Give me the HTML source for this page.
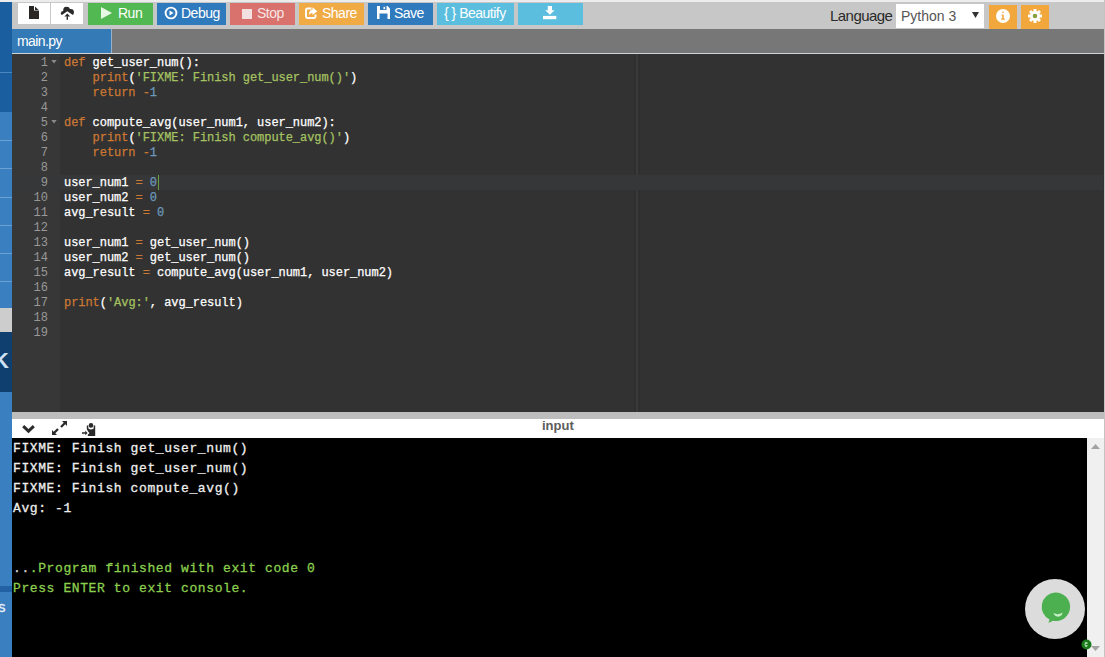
<!DOCTYPE html>
<html><head><meta charset="utf-8">
<style>
*{box-sizing:border-box;margin:0;padding:0}
html,body{width:1105px;height:657px;overflow:hidden;background:#c7c7c7;font-family:"Liberation Sans",sans-serif}
.abs{position:absolute}
svg{position:absolute;overflow:visible}
#left{left:0;top:0;width:12px;height:657px;background:#3a7fc0}
#toolbar{left:12px;top:0;width:1093px;height:29px;background:#c7c7c7;border-top:2px solid #ececec}
.btn{position:absolute;top:3px;height:22px;color:#fff;font-size:14px;line-height:21px;letter-spacing:-0.5px;white-space:nowrap}
.btn span{position:absolute;top:0}
#tabbar{left:12px;top:29px;width:1093px;height:24px;background:#777}
#tab{left:12px;top:29px;width:99px;height:24px;background:#337ab7;color:#fff;font-size:14px;line-height:24px;padding-left:5px;letter-spacing:-0.6px}
#tabline{left:12px;top:53px;width:1093px;height:1px;background:#cfd4d8}
#editor{left:12px;top:54px;width:1093px;height:358px;background:#323232}
#gutter{left:12px;top:54px;width:48px;height:358px;background:#373737}
#pm{left:634px;top:54px;width:6px;height:358px;background:#2f2f2f}
#pm2{left:636px;top:54px;width:2px;height:358px;background:#3a3a3a}
#active{left:60px;top:175px;width:1043px;height:15px;background:#363738}
#gactive{left:12px;top:175px;width:48px;height:15px;background:#363738}
#code{left:64px;top:56px;font-family:"Liberation Mono",monospace;font-size:12px;line-height:15px;letter-spacing:-0.05px;color:#fff;white-space:pre;-webkit-text-stroke:0.25px currentColor}
#nums{left:12px;top:56px;width:36px;font-family:"Liberation Mono",monospace;font-size:12px;line-height:15px;color:#999;text-align:right;white-space:pre}
.k{color:#CC7833}.s{color:#A5C261}.n{color:#6C99BB}
#splitter{left:12px;top:412px;width:1093px;height:7px;background:#bdbdbd}
#chead{left:12px;top:419px;width:1092px;height:19px;background:#fff}
#console{left:12px;top:438px;width:1075px;height:219px;background:#000}
#out{left:13px;top:439px;font-family:"Liberation Mono",monospace;font-weight:normal;-webkit-text-stroke:0.3px currentColor;font-size:13px;letter-spacing:0.6px;line-height:20px;color:#eee;white-space:pre}
#scroll{left:1087px;top:438px;width:17px;height:219px;background:#f0f0f0}
#redge{left:1104px;top:0;width:1px;height:657px;background:#c4c4c4}
</style></head><body>
<div id="left" class="abs"></div>
<div class="abs" style="left:0;top:0;width:12px;height:112px;background:#1b5e9f"></div>
<div class="abs" style="left:0;top:72px;width:12px;height:1px;background:#4b87bf"></div>
<div class="abs" style="left:0;top:140px;width:12px;height:1px;background:#6aa2d4"></div>
<div class="abs" style="left:0;top:168px;width:12px;height:1px;background:#6aa2d4"></div>
<div class="abs" style="left:0;top:197px;width:12px;height:1px;background:#6aa2d4"></div>
<div class="abs" style="left:0;top:225px;width:12px;height:1px;background:#6aa2d4"></div>
<div class="abs" style="left:0;top:253px;width:12px;height:1px;background:#6aa2d4"></div>
<div class="abs" style="left:0;top:281px;width:12px;height:1px;background:#6aa2d4"></div>
<div class="abs" style="left:0;top:308px;width:12px;height:24px;background:#cdcdcd"></div>
<div class="abs" style="left:0;top:332px;width:12px;height:60px;background:#0f3f6e"></div>
<div class="abs" style="left:-7px;top:349px;font-size:22px;font-weight:bold;color:#cfe2f4;line-height:24px">K</div>
<div class="abs" style="left:0;top:586px;width:12px;height:6px;background:#2262a2"></div>
<div class="abs" style="left:-2px;top:598px;font-size:15px;color:#e8f0f8;line-height:18px;-webkit-text-stroke:0.3px #e8f0f8">s</div>

<div id="toolbar" class="abs"></div>
<div class="abs" style="left:0;top:0;width:1105px;height:2px;background:#ececec"></div>
<div class="btn" style="left:18px;width:32px;height:21px;top:3px;background:#fff">
 <svg style="left:11px;top:3px" width="10" height="13" viewBox="0 0 10 13"><path d="M0 0H5V4.6H10V13H0Z" fill="#2a2624"/><path d="M6 0.6L9.6 4.1H6Z" fill="#2a2a2a"/></svg>
</div>
<div class="abs" style="left:50px;top:3px;width:1px;height:21px;background:#c8c8c8"></div>
<div class="btn" style="left:51px;width:32px;height:21px;top:3px;background:#fff">
 <svg style="left:9px;top:3px" width="14" height="14" viewBox="0 0 14 14"><g fill="#2a2a2a"><circle cx="3.3" cy="7.3" r="2.4"/><circle cx="6.6" cy="4.1" r="3.4"/><circle cx="10.6" cy="6.3" r="3.3"/><rect x="3.3" y="5" width="7.3" height="4.6"/></g><path d="M0 10.2L7.3 5.3L14 9.8V14H0Z" fill="#fff"/><path d="M4.4 10.4L7.3 7.6L10.2 10.4Z" fill="#2a2a2a"/><rect x="6.6" y="10.2" width="1.4" height="3.6" fill="#2a2a2a"/></svg>
</div>
<div class="btn" style="left:88px;width:65px;background:#52b852">
 <svg style="left:13px;top:4px" width="11" height="12" viewBox="0 0 11 12"><path d="M0 0L11 6L0 12Z" fill="#e6f7e6"/></svg>
 <span style="left:30px">Run</span></div>
<div class="btn" style="left:157px;width:69px;background:#2f7abd">
 <svg style="left:6.5px;top:2.5px" width="14" height="14" viewBox="0 0 14 14"><circle cx="7" cy="7" r="5.4" fill="none" stroke="#fff" stroke-width="1.9"/><path d="M5.5 4.4L9.6 7L5.5 9.6Z" fill="#fff"/></svg>
 <span style="left:24px">Debug</span></div>
<div class="btn" style="left:230px;width:65px;background:#d9716d;color:#f8e6e6">
 <svg style="left:12px;top:6px" width="10" height="10" viewBox="0 0 10 10"><rect width="10" height="10" fill="#f3e0e0"/></svg>
 <span style="left:27px">Stop</span></div>
<div class="btn" style="left:299px;width:65px;background:#f1ab45">
 <svg style="left:6px;top:3.5px" width="13" height="13" viewBox="0 0 13 13"><path d="M6.5 1.5H2.5Q1 1.5 1 3V9.5Q1 11 2.5 11H9Q10.5 11 10.5 9.5V7.5" fill="none" stroke="#fff" stroke-width="1.9"/><path d="M7.5 0.3L12.3 4.2L7.5 8V6Q5 6 3.8 8.3Q4 3.2 7.5 2.6Z" fill="#fff"/></svg>
 <span style="left:23px">Share</span></div>
<div class="btn" style="left:368px;width:65px;background:#2f7abd">
 <svg style="left:9px;top:2.5px" width="13" height="13" viewBox="0 0 13 13"><path d="M0 0H10.5L13 2.5V13H0Z" fill="#fff"/><rect x="3" y="0" width="6.5" height="4" fill="#2f7abd"/><rect x="6.5" y="0.8" width="1.6" height="2.4" fill="#fff"/><rect x="2.5" y="7.5" width="8" height="5.5" fill="#2f7abd"/></svg>
 <span style="left:26px">Save</span></div>
<div class="btn" style="left:437px;width:77px;background:#5bbede">
 <span style="left:7px">{ } Beautify</span></div>
<div class="btn" style="left:518px;width:65px;background:#5bbede">
 <svg style="left:25px;top:3px" width="14" height="14" viewBox="0 0 14 14"><path d="M4.8 0H9V4.2H11.6L6.9 8.8L2.2 4.2H4.8Z" fill="#fff"/><rect x="0" y="9.9" width="13.3" height="3.3" fill="#fff"/></svg>
</div>
<div class="abs" style="left:830px;top:7px;font-size:15px;color:#2a2a2a;letter-spacing:-0.55px">Language</div>
<div class="abs" style="left:896px;top:4px;width:88px;height:24px;background:#fff;font-size:14px;color:#555;line-height:24px;padding-left:5px">Python 3</div>
<svg style="left:972px;top:12px" width="7" height="6" viewBox="0 0 7 6"><path d="M0 0H7L3.5 6Z" fill="#333"/></svg>
<div class="btn" style="left:989px;width:28px;top:5px;height:24px;background:#f2a73c">
 <svg style="left:7px;top:4px" width="14" height="14" viewBox="0 0 14 14"><circle cx="7" cy="7" r="7" fill="#fff"/><rect x="6.3" y="2.6" width="1.4" height="1.5" fill="#f2a73c"/><rect x="6.2" y="5.6" width="1.6" height="4.4" fill="#f2a73c"/><rect x="5" y="9.6" width="4" height="1.1" fill="#f2a73c"/><rect x="5.4" y="5.6" width="1" height="1" fill="#f2a73c"/></svg>
</div>
<div class="btn" style="left:1021px;width:28px;top:5px;height:24px;background:#f2a73c">
 <svg style="left:7px;top:4px" width="14" height="14" viewBox="-7 -7 14 14"><g fill="#fff"><circle r="5"/><rect x="-1.5" y="-7" width="3" height="14"/><rect x="-1.5" y="-7" width="3" height="14" transform="rotate(45)"/><rect x="-1.5" y="-7" width="3" height="14" transform="rotate(90)"/><rect x="-1.5" y="-7" width="3" height="14" transform="rotate(135)"/></g><circle r="2.3" fill="#8aa040"/></svg>
</div>

<div id="tabbar" class="abs"></div>
<div id="tab" class="abs">main.py</div>
<div class="abs" style="left:111px;top:29px;width:1px;height:24px;background:#9ab2c8"></div>
<div id="tabline" class="abs"></div>
<div id="editor" class="abs"></div>
<div id="gutter" class="abs"></div>
<div id="pm" class="abs"></div><div id="pm2" class="abs"></div>
<div id="gactive" class="abs"></div>
<div id="active" class="abs"></div>
<svg style="left:51px;top:60px" width="6" height="4" viewBox="0 0 6 4"><path d="M0.3 0H5.7L3 3.5Z" fill="#8a8a8a"/></svg>
<svg style="left:51px;top:120px" width="6" height="4" viewBox="0 0 6 4"><path d="M0.3 0H5.7L3 3.5Z" fill="#8a8a8a"/></svg>
<div class="abs" style="left:158px;top:175px;width:1px;height:15px;background:#7ab84a;opacity:.8"></div>
<div id="nums" class="abs">1
2
3
4
5
6
7
8
9
10
11
12
13
14
15
16
17
18
19</div>
<div id="code" class="abs"><span class="k">def</span> get_user_num():
    <span class="k">print</span>(<span class="s">'FIXME: Finish get_user_num()'</span>)
    <span class="k">return</span> <span class="k">-</span><span class="n">1</span>

<span class="k">def</span> compute_avg(user_num1, user_num2):
    <span class="k">print</span>(<span class="s">'FIXME: Finish compute_avg()'</span>)
    <span class="k">return</span> <span class="k">-</span><span class="n">1</span>

user_num1 <span class="k">=</span> <span class="n">0</span>
user_num2 <span class="k">=</span> <span class="n">0</span>
avg_result <span class="k">=</span> <span class="n">0</span>

user_num1 <span class="k">=</span> get_user_num()
user_num2 <span class="k">=</span> get_user_num()
avg_result <span class="k">=</span> compute_avg(user_num1, user_num2)

<span class="k">print</span>(<span class="s">'Avg:'</span>, avg_result)</div>

<div id="splitter" class="abs"></div>
<div id="chead" class="abs"></div>
<svg style="left:22px;top:425px" width="13" height="8" viewBox="0 0 13 8"><path d="M1.2 1.2L6.5 6.2L11.8 1.2" fill="none" stroke="#2b2b2b" stroke-width="3"/></svg>
<svg style="left:52px;top:421px" width="15" height="14" viewBox="0 0 15 14"><path d="M10 0H15V5L13.3 3.3L9.8 6.8L8.2 5.2L11.7 1.7Z M0 14V9L1.7 10.7L5.2 7.2L6.8 8.8L3.3 12.3L5 14Z" fill="#2b2b2b"/></svg>
<svg style="left:82px;top:423px" width="14" height="13" viewBox="0 0 14 13"><circle cx="9" cy="2.4" r="2.3" fill="#2b2b2b"/><path d="M4.8 2.5H6.3V5.3Q6.3 6.4 9 6.4Q11.7 6.4 11.7 5.3V2.5H13.2V13H5.8V11.8L7.5 10L5.8 8.2V7.8Q4.8 7 4.8 5.5Z" fill="#2b2b2b"/><path d="M0 9.3H3.3V7.8L5.6 10L3.3 12.2V10.7H0Z" fill="#2b2b2b"/></svg>
<div class="abs" style="left:542px;top:418px;font-size:13px;font-weight:bold;color:#5c5c5c;line-height:16px">input</div>
<div id="console" class="abs"></div>
<div id="out" class="abs">FIXME: Finish get_user_num()
FIXME: Finish get_user_num()
FIXME: Finish compute_avg()
Avg: -1


<span style="color:#d0d0d0">..</span><span style="color:#8ccf4e">.Program finished with exit code 0
Press ENTER to exit console.</span></div>
<div id="scroll" class="abs"></div>
<svg style="left:1091px;top:444px" width="9" height="5" viewBox="0 0 9 5"><path d="M0 5H9L4.5 0Z" fill="#a3a3a3"/></svg>
<svg style="left:1091px;top:646px" width="9" height="5" viewBox="0 0 9 5"><path d="M0 0H9L4.5 5Z" fill="#a3a3a3"/></svg>
<div id="redge" class="abs"></div>
<div class="abs" style="left:1025px;top:579px;width:60px;height:60px;border-radius:50%;background:#dcdcdc"></div>
<svg style="left:1040px;top:592px" width="30" height="32" viewBox="0 0 30 32"><path d="M15 0.5A14.3 14.3 0 1 1 13 28.8L8.5 31L9.5 27.5A14.3 14.3 0 0 1 15 0.5Z" fill="#4cb050"/><path d="M13.5 21Q18 23.5 22.5 20.5Q22 25 17.5 24.6Q14.5 24.2 13.5 21Z" fill="#c6efc6"/></svg>
<svg style="left:1081px;top:639px" width="11" height="11" viewBox="0 0 11 11"><circle cx="5.5" cy="5.5" r="5" fill="#1b7a1b"/><ellipse cx="5.2" cy="5.5" rx="1.6" ry="2.4" fill="#bfe8bf"/><rect x="4.5" y="4.8" width="3" height="1.4" fill="#1b7a1b"/></svg>
</body></html>
